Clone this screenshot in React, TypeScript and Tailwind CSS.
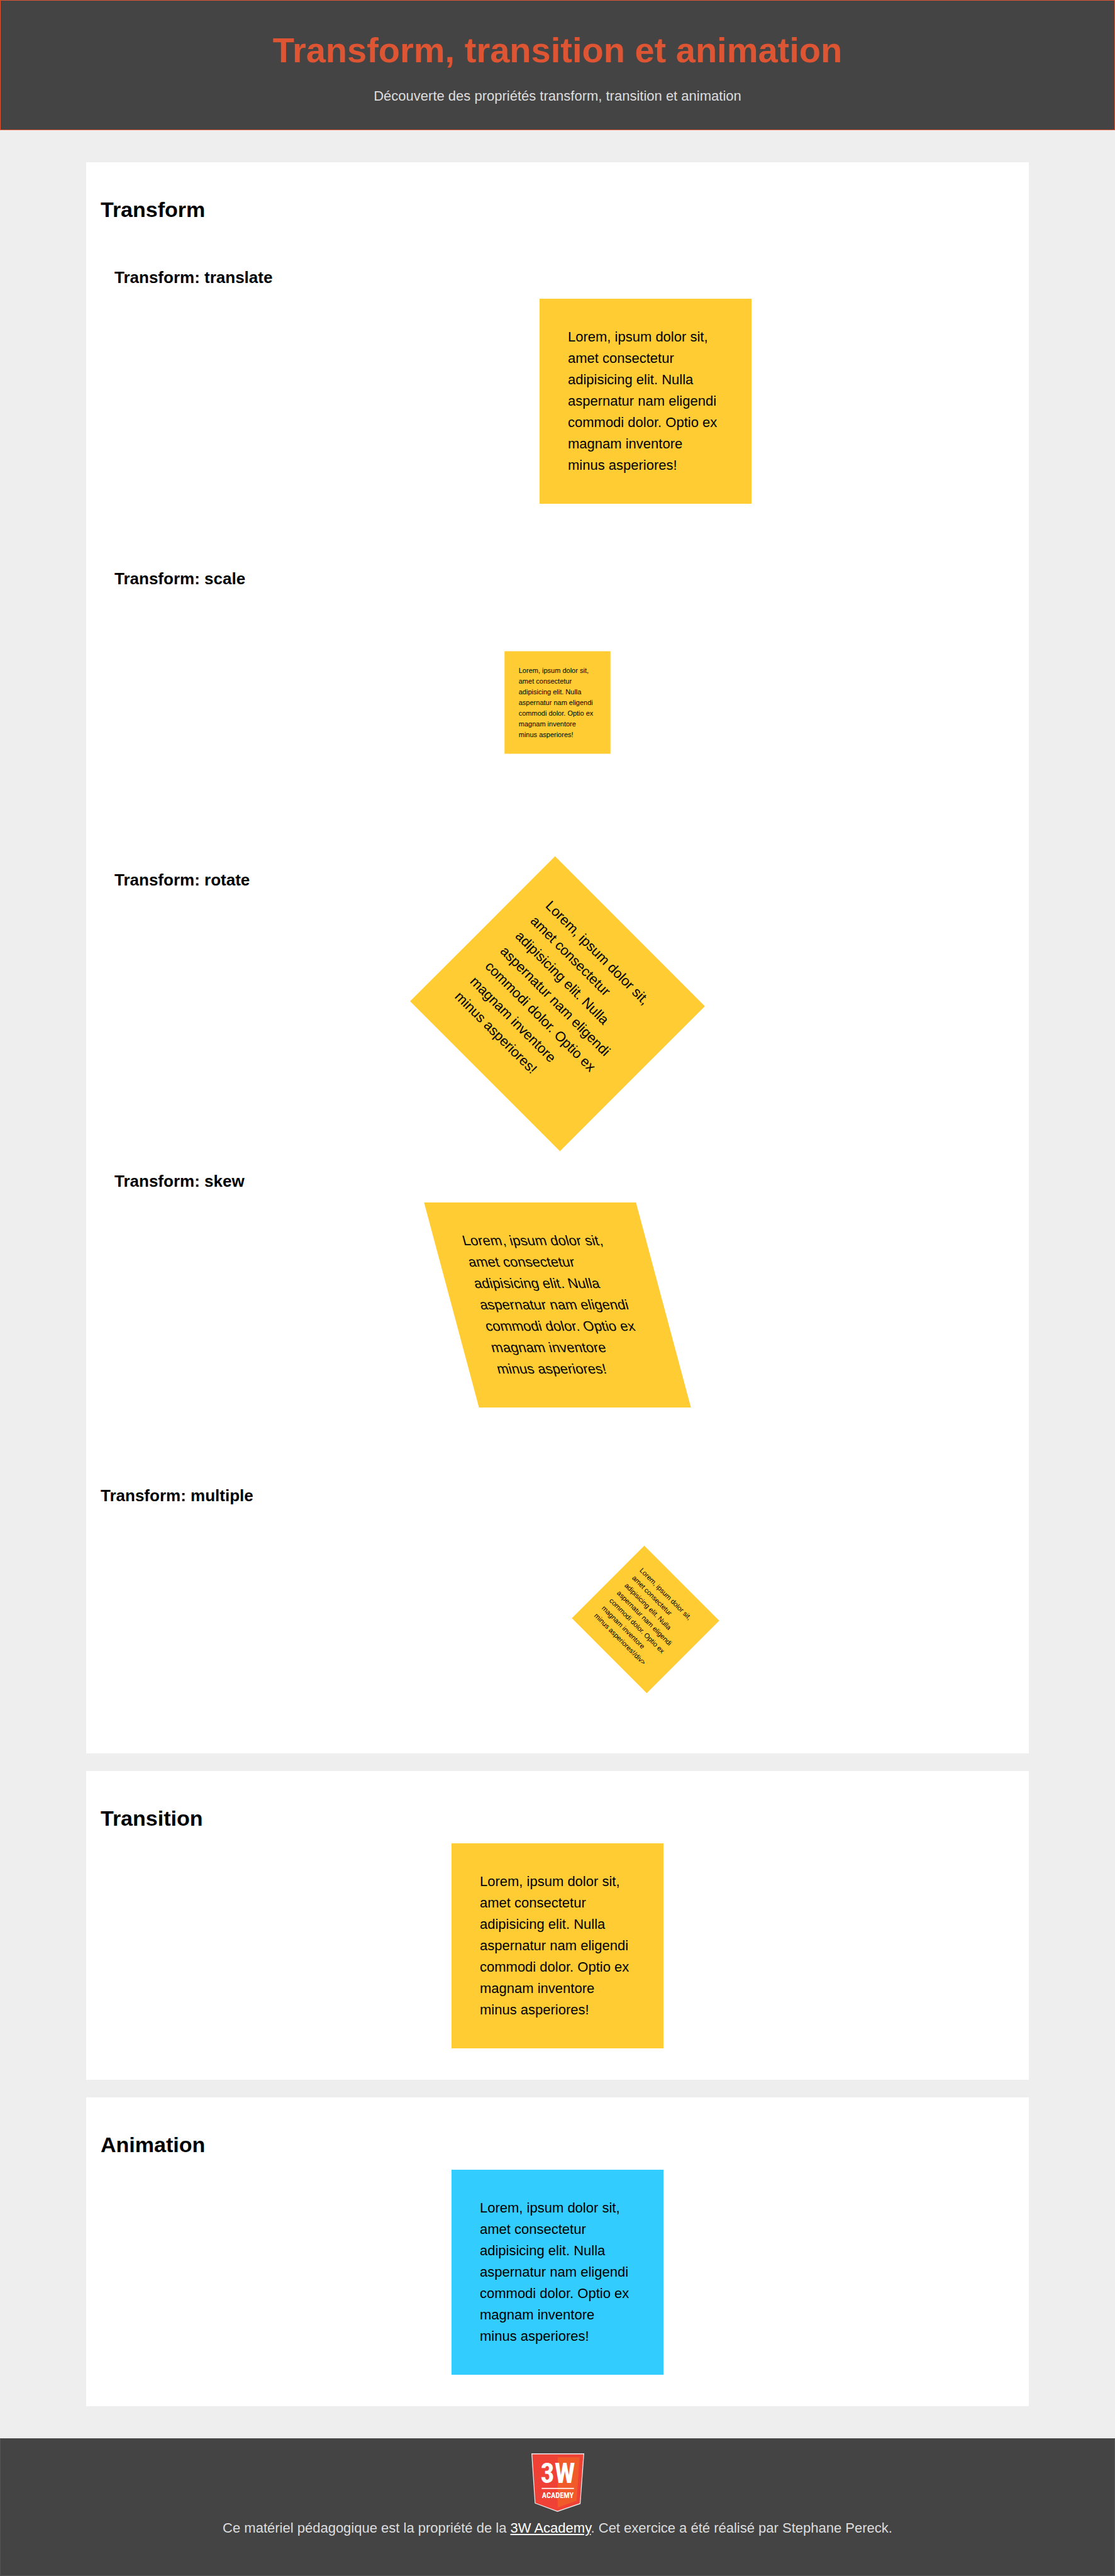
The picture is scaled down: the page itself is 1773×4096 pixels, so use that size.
import type { ReactNode } from "react";

const LOREM =
  "Lorem, ipsum dolor sit, amet consectetur adipisicing elit. Nulla aspernatur nam eligendi commodi dolor. Optio ex magnam inventore minus asperiores!";

function Box({ className, children = LOREM }: { className: string; children?: ReactNode }) {
  return (
    <div className={`mx-auto w-[337px] py-11 pr-12 pl-[45px] text-[22px] leading-[34px] ${className}`}>
      {children}
    </div>
  );
}

function Card({ title, children }: { title: string; children: ReactNode }) {
  return (
    <section className="bg-white px-[23px] py-[50px]">
      <h2 className="text-[34px] leading-[51px] font-bold">{title}</h2>
      {children}
    </section>
  );
}

function Example({ title, children }: { title: string; children: ReactNode }) {
  return (
    <article>
      <h3 className="mb-3.5 text-[26px] leading-10 font-bold">{title}</h3>
      {children}
    </article>
  );
}

function Logo() {
  return (
    <svg viewBox="0 0 150 166" className="h-[93px] w-[84px]" role="img" aria-label="3W Academy">
      <path d="M0 0H150L139.500 143.500L74 166L9.500 142Z" fill="#e8eeee" />
      <path d="M2.500 2.500H147.500L137.500 141.500L74 163.500L11.500 140.500Z" fill="#ef4136" />
      <path d="M74.500 11H137L128.500 135L74.500 154Z" fill="#f15a29" />
      <g
        fill="#fff"
        fontWeight="700"
        textAnchor="middle"
        fontFamily="'Roboto Condensed','Open Sans Condensed','Liberation Sans Narrow','Liberation Sans',sans-serif"
      >
        <text x="75" y="84" fontSize="78">
          3W
        </text>
        <rect x="29" y="98" width="92" height="3" />
        <text x="75" y="127" fontSize="22">
          ACADEMY
        </text>
      </g>
    </svg>
  );
}

export default function App() {
  return (
    <div className="bg-[#eeeeee] font-['Liberation_Sans',Arial,sans-serif] text-black">
      <header className="border border-[#dd5533] bg-[#444444] pt-[37px] pb-9 text-center">
        <h1 className="mb-3.5 text-[56px] leading-[84px] font-bold text-[#dd5533]">
          Transform, transition et animation
        </h1>
        <p className="text-[22px] leading-[34px] text-[#dddddd]">
          Découverte des propriétés transform, transition et animation
        </p>
      </header>

      <main className="mx-auto flex max-w-[1499px] flex-col gap-7 py-[51px]">
        <Card title="Transform">
          <div className="mt-[62px] mb-[120px] flex flex-col gap-[99px] px-[22px]">
            <Example title="Transform: translate">
              <Box className="translate-x-[140px] bg-[#ffcc33]" />
            </Example>
            <Example title="Transform: scale">
              <Box className="scale-50 bg-[#ffcc33]" />
            </Example>
            <Example title="Transform: rotate">
              <Box className="rotate-45 bg-[#ffcc33]" />
            </Example>
            <Example title="Transform: skew">
              <Box className="skew-x-[15deg] bg-[#ffcc33]" />
            </Example>
          </div>
          <Example title="Transform: multiple">
            <Box className="translate-x-[140px] scale-50 rotate-45 bg-[#ffcc33]">{LOREM + "/div>"}</Box>
          </Example>
        </Card>

        <Card title="Transition">
          <Box className="mt-3.5 bg-[#ffcc33] transition-colors" />
        </Card>

        <Card title="Animation">
          <Box className="mt-3.5 bg-[#33ccff]" />
        </Card>
      </main>

      <footer className="flex flex-col items-center gap-[9px] border border-[#555555] bg-[#444444] pt-[23px] pb-[58px] text-center text-[22px] leading-[34px] text-[#dddddd]">
        <Logo />
        <p>
          Ce matériel pédagogique est la propriété de la{" "}
          <a href="#" className="text-white underline">
            3W Academy
          </a>
          . Cet exercice a été réalisé par Stephane Pereck.
        </p>
      </footer>
    </div>
  );
}
